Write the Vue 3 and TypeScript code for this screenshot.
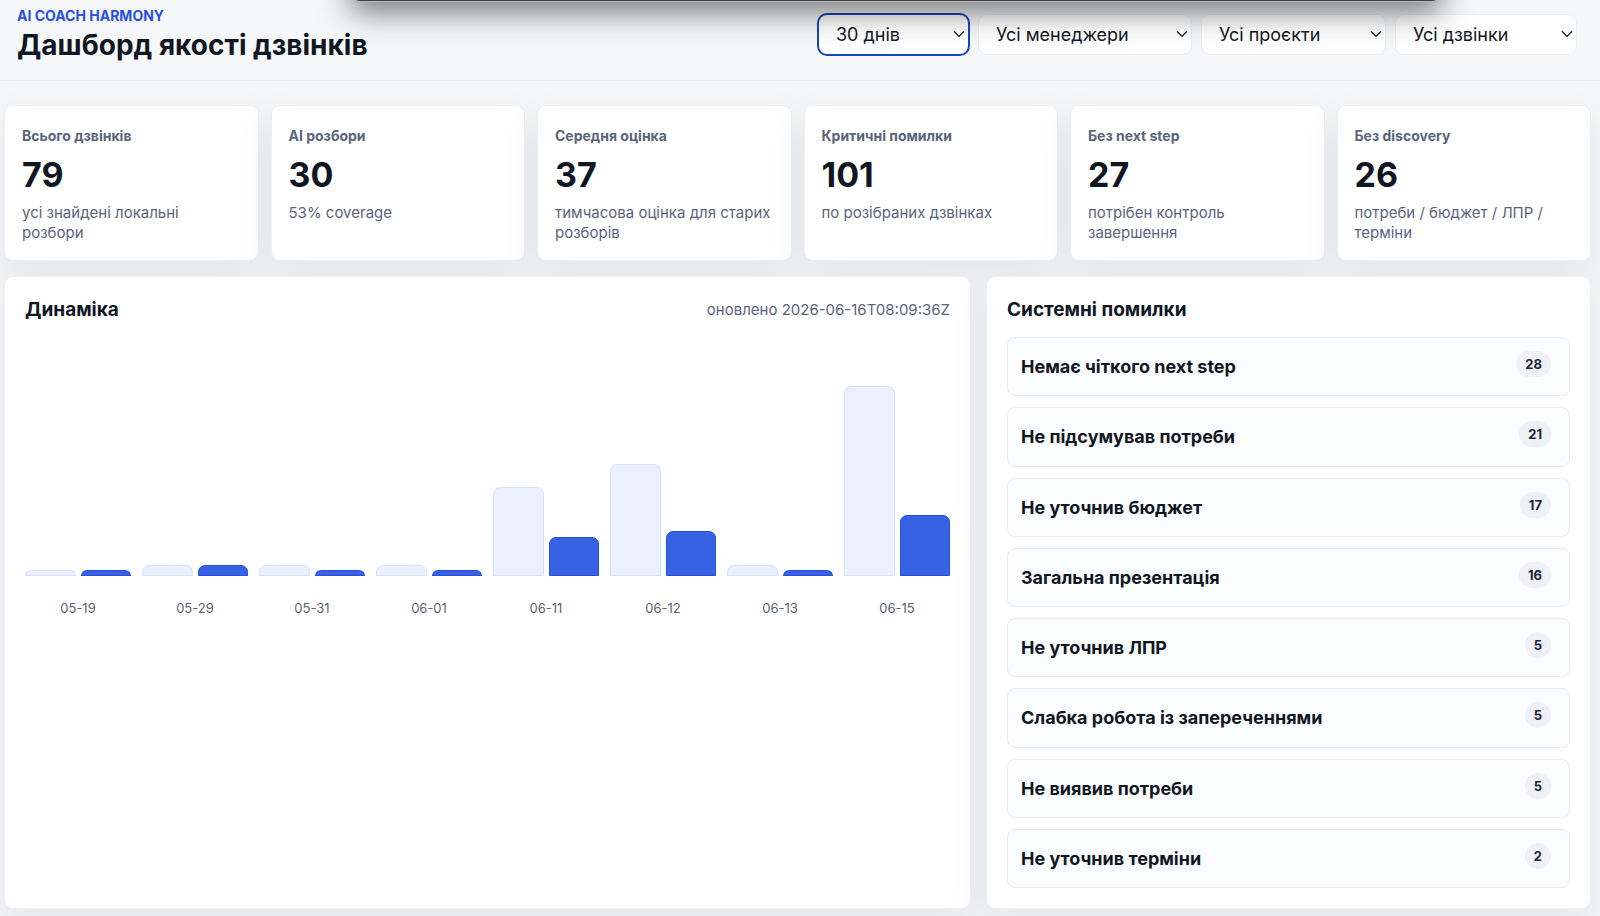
<script setup lang="ts">
import { ref } from 'vue'

interface Filter {
  id: string
  label: string
  options: string[]
  active: boolean
}
interface Metric {
  label: string
  value: number
  note: string
}
interface Day {
  date: string
  calls: number
  reviews: number
}
interface Mistake {
  title: string
  count: number
}

const filters = ref<Filter[]>([
  { id: 'period', label: 'Період', options: ['30 днів'], active: true },
  { id: 'manager', label: 'Менеджер', options: ['Усі менеджери'], active: false },
  { id: 'project', label: 'Проєкт', options: ['Усі проєкти'], active: false },
  { id: 'calls', label: 'Дзвінки', options: ['Усі дзвінки'], active: false },
])

const metrics: Metric[] = [
  { label: 'Всього дзвінків', value: 79, note: 'усі знайдені локальні розбори' },
  { label: 'AI розбори', value: 30, note: '53% coverage' },
  { label: 'Середня оцінка', value: 37, note: 'тимчасова оцінка для старих розборів' },
  { label: 'Критичні помилки', value: 101, note: 'по розібраних дзвінках' },
  { label: 'Без next step', value: 27, note: 'потрібен контроль завершення' },
  { label: 'Без discovery', value: 26, note: 'потреби / бюджет / ЛПР / терміни' },
]

const days: Day[] = [
  { date: '05-19', calls: 1, reviews: 1 },
  { date: '05-29', calls: 2, reviews: 2 },
  { date: '05-31', calls: 2, reviews: 1 },
  { date: '06-01', calls: 2, reviews: 1 },
  { date: '06-11', calls: 16, reviews: 7 },
  { date: '06-12', calls: 20, reviews: 8 },
  { date: '06-13', calls: 2, reviews: 1 },
  { date: '06-15', calls: 34, reviews: 11 },
]

const maxCalls = Math.max(...days.map((d) => d.calls))
const barHeight = (n: number): string => `${(n / maxCalls) * 100}%`

const mistakes: Mistake[] = [
  { title: 'Немає чіткого next step', count: 28 },
  { title: 'Не підсумував потреби', count: 21 },
  { title: 'Не уточнив бюджет', count: 17 },
  { title: 'Загальна презентація', count: 16 },
  { title: 'Не уточнив ЛПР', count: 5 },
  { title: 'Слабка робота із запереченнями', count: 5 },
  { title: 'Не виявив потреби', count: 5 },
  { title: 'Не уточнив терміни', count: 2 },
]
</script>

<template>
  <div class="page">
    <div class="floating-window" aria-hidden="true"></div>

    <header class="topbar">
      <div>
        <p class="eyebrow">AI COACH HARMONY</p>
        <h1 class="title">Дашборд якості дзвінків</h1>
      </div>
      <form class="filters" @submit.prevent>
        <div v-for="f in filters" :key="f.id" class="filter" :class="[f.id, { active: f.active }]">
          <select :id="f.id" class="filter-select" :aria-label="f.label">
            <option v-for="o in f.options" :key="o">{{ o }}</option>
          </select>
          <svg class="chevron" viewBox="0 0 12 8" aria-hidden="true">
            <path d="M1 1.2 L6 6.4 L11 1.2" />
          </svg>
        </div>
      </form>
    </header>

    <main class="content">
      <section class="metrics">
        <article v-for="m in metrics" :key="m.label" class="card">
          <h2 class="card-label">{{ m.label }}</h2>
          <strong class="card-value">{{ m.value }}</strong>
          <p class="card-note">{{ m.note }}</p>
        </article>
      </section>

      <div class="panels">
        <section class="panel">
          <div class="panel-head">
            <h2 class="panel-title">Динаміка</h2>
            <span class="updated">оновлено 2026-06-16T08:09:36Z</span>
          </div>
          <div class="chart">
            <div v-for="d in days" :key="d.date" class="day">
              <div class="bars">
                <div class="bar calls-bar" :style="{ height: barHeight(d.calls) }"></div>
                <div class="bar reviews-bar" :style="{ height: barHeight(d.reviews) }"></div>
              </div>
              <span class="date">{{ d.date }}</span>
            </div>
          </div>
        </section>

        <section class="panel">
          <div class="panel-head">
            <h2 class="panel-title">Системні помилки</h2>
          </div>
          <ul class="mistakes">
            <li v-for="m in mistakes" :key="m.title" class="mistake">
              <span class="mistake-title">{{ m.title }}</span>
              <span class="badge">{{ m.count }}</span>
            </li>
          </ul>
        </section>
      </div>
    </main>
  </div>
</template>

<style>
body {
  margin: 0;
  background: #f5f7f9;
}
</style>

<style scoped>
* {
  box-sizing: border-box;
}
.page {
  position: relative;
  display: flex;
  flex-direction: column;
  min-height: 100vh;
  overflow: hidden;
  background: #f5f7f9;
  color: #111722;
  font-family: Inter, "Liberation Sans", sans-serif;
}
h1,
h2,
p,
ul {
  margin: 0;
  padding: 0;
}
.floating-window {
  position: absolute;
  z-index: 2;
  top: -39px;
  left: 22%;
  right: 10%;
  height: 40px;
  border-radius: 8px;
  background: #454148;
  box-shadow: 0 0 0 1px rgba(190, 190, 194, 0.8), 0 8px 32px 2px rgba(0, 0, 0, 0.55);
  pointer-events: none;
}
.topbar {
  display: flex;
  justify-content: space-between;
  align-items: flex-start;
  height: 81px;
  padding: 6px 23px 0 17px;
  border-bottom: 1px solid #e9ebee;
}
.eyebrow {
  font-size: 14px;
  line-height: 20px;
  font-weight: 700;
  color: #2850df;
}
.title {
  font-size: 28px;
  line-height: 38px;
  font-weight: 700;
}
.filters {
  display: flex;
  gap: 9px;
  padding-top: 8px;
}
.filter {
  position: relative;
}
.filter.period {
  width: 151px;
}
.filter.manager {
  width: 214px;
}
.filter.project {
  width: 185px;
}
.filter.calls {
  width: 182px;
}
.filter-select {
  display: block;
  width: 100%;
  height: 41px;
  padding: 0 28px 0 17px;
  border: 1px solid #eceef1;
  border-radius: 9px;
  background: #fff;
  color: #111722;
  font: inherit;
  font-size: 18px;
  appearance: none;
}
.active .filter-select {
  outline: 2px solid #1549b8;
  outline-offset: -1px;
}
.chevron {
  position: absolute;
  right: 4px;
  top: 16px;
  width: 12px;
  height: 8px;
  fill: none;
  stroke: #111722;
  stroke-width: 1.3;
  pointer-events: none;
}
.content {
  flex: 1;
  display: flex;
  flex-direction: column;
  gap: 15px;
  padding: 24px 9px 7px 4px;
}
.metrics {
  display: grid;
  grid-template-columns: repeat(6, 1fr);
  gap: 12px;
}
.card,
.panel {
  border: 1px solid #eceef1;
  border-radius: 9px;
  background: #fff;
  box-shadow: 0 14px 38px rgba(24, 24, 36, 0.08);
}
.card {
  min-height: 156px;
  padding: 20px 17px 16px;
}
.card-label {
  font-size: 14px;
  line-height: 20px;
  font-weight: 700;
  color: #5a647a;
}
.card-value {
  display: block;
  margin: 9px 0 8px;
  font-size: 34px;
  line-height: 40px;
  font-weight: 700;
}
.card-note {
  font-size: 15px;
  line-height: 20px;
  color: #5a647a;
}
.panels {
  flex: 1;
  display: grid;
  grid-template-columns: 967fr 605fr;
  gap: 15px;
}
.panel {
  display: flex;
  flex-direction: column;
  min-width: 0;
  padding: 20px;
}
.panel-head {
  display: flex;
  justify-content: space-between;
  align-items: center;
  height: 25px;
}
.panel-title {
  font-size: 19px;
  line-height: 25px;
  font-weight: 700;
}
.updated {
  font-size: 15px;
  line-height: 20px;
  color: #5a647a;
}
.chart {
  display: flex;
  gap: 11px;
  padding-top: 64px;
}
.day {
  flex: 1;
  display: flex;
  flex-direction: column;
  gap: 22px;
}
.bars {
  display: flex;
  align-items: flex-end;
  gap: 5px;
  height: 190px;
}
.bar {
  flex: 1;
  border: 1px solid #d8e1fa;
  border-radius: 7px 7px 0 0;
  background: #eaf0fe;
}
.reviews-bar {
  border-color: #2450dc;
  background: #3762e3;
}
.date {
  font-size: 13px;
  line-height: 20px;
  text-align: center;
  color: #5a647a;
}
.mistakes {
  flex: 1;
  display: flex;
  flex-direction: column;
  gap: 11px;
  margin-top: 15px;
  list-style: none;
}
.mistake {
  flex: 1;
  display: flex;
  justify-content: space-between;
  align-items: flex-start;
  padding: 13px 18px 12px 13px;
  border: 1px solid #e9ebef;
  border-radius: 8px;
  background: #fbfcfd;
}
.mistake-title {
  font-size: 18px;
  line-height: 32px;
  font-weight: 700;
}
.badge {
  padding: 0 9px;
  border-radius: 13px;
  background: #eff1f6;
  font-size: 13px;
  line-height: 26px;
  font-weight: 700;
  color: #1d2438;
}
</style>
